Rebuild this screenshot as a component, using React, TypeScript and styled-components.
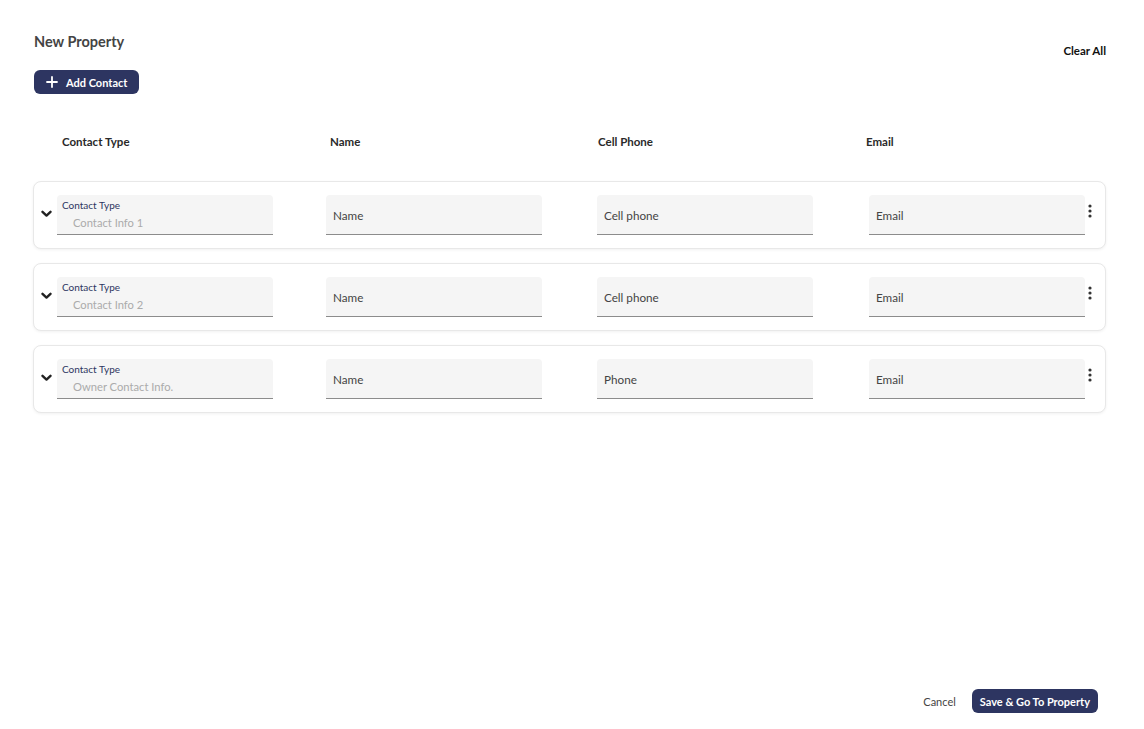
import React from 'react';
import styled, { createGlobalStyle } from 'styled-components';

const GlobalStyle = createGlobalStyle`
  html, body {
    margin: 0;
    padding: 0;
    background: #ffffff;
    font-family: Lato, "Open Sans", Arial, sans-serif;
  }
  * { box-sizing: border-box; }
`;

const Page = styled.div`
  min-height: 100vh;
  display: flex;
  flex-direction: column;
  padding: 34px 38px 16px 34px;
`;

const TopBar = styled.div`
  display: flex;
  justify-content: space-between;
  align-items: flex-start;
`;

const TitleBlock = styled.div`
  display: flex;
  flex-direction: column;
  gap: 20px;
`;

const Title = styled.h1`
  margin: 0;
  font-size: 14.5px;
  font-weight: 700;
  color: #444444;
  line-height: 16px;
`;

const PrimaryButton = styled.button<{ compact?: boolean }>`
  display: inline-flex;
  align-items: center;
  gap: 8px;
  height: 24px;
  padding: 0 ${p => (p.compact ? '8px' : '12px')};
  border: none;
  border-radius: 6px;
  background: #2d3561;
  color: #ffffff;
  font-family: inherit;
  font-size: 11px;
  font-weight: 700;
  cursor: pointer;
  width: fit-content;
`;

const TextButton = styled.button<{ bold?: boolean }>`
  border: none;
  background: none;
  padding: 0;
  font-family: inherit;
  font-size: ${p => (p.bold ? '11.5px' : '11px')};
  font-weight: ${p => (p.bold ? 700 : 400)};
  color: ${p => (p.bold ? '#111111' : '#444444')};
  cursor: pointer;
`;

const ClearAll = styled(TextButton)`
  margin-top: 10px;
`;

const HeaderRow = styled.div`
  display: grid;
  grid-template-columns: repeat(4, 268px);
  padding-left: 28px;
  margin-top: 41px;
  margin-bottom: 32px;
`;

const HeaderCell = styled.div`
  font-size: 11.5px;
  font-weight: 700;
  color: #2a2a2a;
  line-height: 14px;
`;

const List = styled.div`
  display: flex;
  flex-direction: column;
  gap: 14px;
  margin-left: -1px;
`;

const Card = styled.div`
  display: flex;
  align-items: center;
  height: 68px;
  padding: 0 0 0 7px;
  border: 1px solid #e8e8e8;
  border-radius: 8px;
  box-shadow: 0 1px 3px rgba(0, 0, 0, 0.06);
  background: #ffffff;
`;

const Chevron = styled.span`
  width: 16px;
  display: flex;
  justify-content: flex-start;
  margin-top: -3px;
  color: #222222;
`;

const Fields = styled.div`
  display: grid;
  grid-template-columns: 269px 271px 272px 216px;
  flex: none;
`;

const Field = styled.div<{ stacked?: boolean }>`
  width: 216px;
  height: 40px;
  background: #f5f5f5;
  border-radius: 4px 4px 0 0;
  border-bottom: 1px solid #8c8c8c;
  display: flex;
  flex-direction: column;
  justify-content: ${p => (p.stacked ? 'flex-start' : 'center')};
  padding: ${p => (p.stacked ? '4px 5px 0' : '0 7px')};
`;

const FieldLabel = styled.span`
  font-size: 10px;
  line-height: 12px;
  color: #2d3561;
`;

const FieldValue = styled.span`
  font-size: 11.2px;
  line-height: 14px;
  color: #ababab;
  padding-left: 11px;
  margin-top: 5px;
`;

const Placeholder = styled.span`
  font-size: 11.7px;
  color: #444444;
  margin-top: 1px;
`;

const Kebab = styled.span`
  margin-left: 3px;
  margin-top: -9px;
  display: flex;
  color: #333333;
`;

const Footer = styled.div`
  margin-top: auto;
  display: flex;
  justify-content: flex-end;
  align-items: center;
  gap: 16px;
  padding-right: 8px;
`;

const ChevronIcon = () => (
  <svg width="11" height="8" viewBox="0 0 11 8">
    <path d="M1.5 1.8 L5.5 5.6 L9.5 1.8" fill="none" stroke="currentColor" strokeWidth="2.4" strokeLinecap="round" strokeLinejoin="round" />
  </svg>
);

const KebabIcon = () => (
  <svg width="4" height="14" viewBox="0 0 4 14">
    <circle cx="2" cy="2" r="1.6" fill="currentColor" />
    <circle cx="2" cy="7" r="1.6" fill="currentColor" />
    <circle cx="2" cy="12" r="1.6" fill="currentColor" />
  </svg>
);

const PlusIcon = () => (
  <svg width="12" height="12" viewBox="0 0 12 12">
    <path d="M6 1 V11 M1 6 H11" stroke="currentColor" strokeWidth="1.8" strokeLinecap="round" />
  </svg>
);

const contacts = [
  { type: 'Contact Info 1', phone: 'Cell phone' },
  { type: 'Contact Info 2', phone: 'Cell phone' },
  { type: 'Owner Contact Info.', phone: 'Phone' },
];

export default function App() {
  return (
    <>
      <GlobalStyle />
      <Page>
        <TopBar>
          <TitleBlock>
            <Title>New Property</Title>
            <PrimaryButton>
              <PlusIcon />
              Add Contact
            </PrimaryButton>
          </TitleBlock>
          <ClearAll bold>Clear All</ClearAll>
        </TopBar>

        <HeaderRow>
          <HeaderCell>Contact Type</HeaderCell>
          <HeaderCell>Name</HeaderCell>
          <HeaderCell>Cell Phone</HeaderCell>
          <HeaderCell>Email</HeaderCell>
        </HeaderRow>

        <List>
          {contacts.map(c => (
            <Card key={c.type}>
              <Chevron><ChevronIcon /></Chevron>
              <Fields>
                <div>
                  <Field stacked>
                    <FieldLabel>Contact Type</FieldLabel>
                    <FieldValue>{c.type}</FieldValue>
                  </Field>
                </div>
                <div>
                  <Field><Placeholder>Name</Placeholder></Field>
                </div>
                <div>
                  <Field><Placeholder>{c.phone}</Placeholder></Field>
                </div>
                <div>
                  <Field><Placeholder>Email</Placeholder></Field>
                </div>
              </Fields>
              <Kebab><KebabIcon /></Kebab>
            </Card>
          ))}
        </List>

        <Footer>
          <TextButton>Cancel</TextButton>
          <PrimaryButton compact>Save &amp; Go To Property</PrimaryButton>
        </Footer>
      </Page>
    </>
  );
}
